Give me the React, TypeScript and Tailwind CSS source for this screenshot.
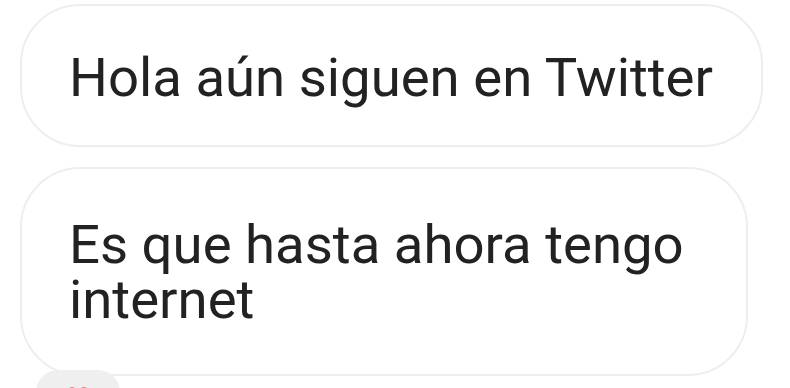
import React from 'react'

const Bubble = ({ children, className }: { children: React.ReactNode; className: string }) => (
    <div className={`border-2 border-[#eeeeee] bg-white rounded-[60px] pl-[47px] flex flex-col justify-center ${className}`}>
        {children}
    </div>
)

const App = () => {
    return (
        <div className="w-[790px] h-[388px] overflow-hidden bg-white pl-[20px] pt-[4px] text-[#222222]" style={{ fontFamily: 'Roboto, "Noto Sans", sans-serif' }}>
            <Bubble className="w-[743px] h-[143px]">
                <p className="text-[54.5px] leading-[60px] pt-[3px]">Hola aún siguen en Twitter</p>
            </Bubble>
            <Bubble className="w-[728px] h-[209px] mt-[20px]">
                <p className="text-[54.5px] leading-[55px]">
                    Es que hasta ahora tengo
                    <br />
                    internet
                </p>
            </Bubble>
            <div className="ml-[16px] -mt-[6px] w-[84px] h-[44px] rounded-full bg-[#efefef] flex justify-center pt-[15px]">
                <svg width="30" height="26" viewBox="0 0 24 22" className="text-[#ed4956]">
                    <path
                        fill="currentColor"
                        d="M12 21s-8-5.2-10.3-10C0 6.6 2.6 2 7 2c2.3 0 4 1.3 5 3 1-1.7 2.7-3 5-3 4.4 0 7 4.6 5.3 9C20 15.8 12 21 12 21z"
                    />
                </svg>
            </div>
        </div>
    )
}

export default App
